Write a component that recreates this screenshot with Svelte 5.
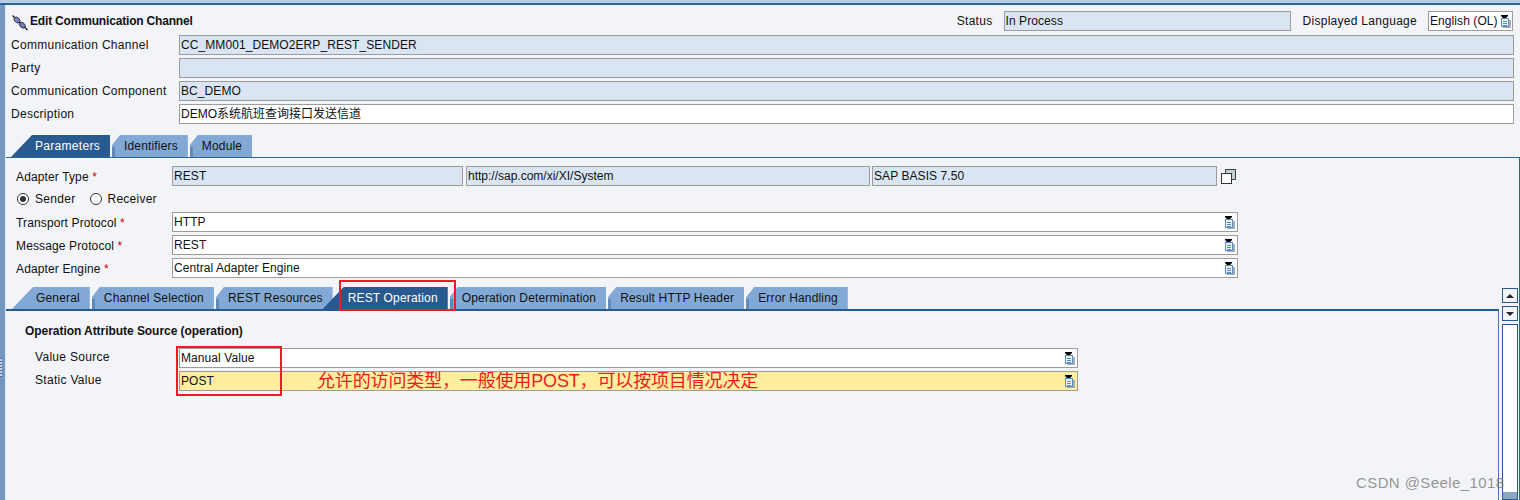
<script>
  const headRows = [
    { label: 'Communication Channel', value: 'CC_MM001_DEMO2ERP_REST_SENDER', ro: true },
    { label: 'Party', value: '', ro: true },
    { label: 'Communication Component', value: 'BC_DEMO', ro: true },
    { label: 'Description', value: 'DEMO系统航班查询接口发送信道', ro: false }
  ];
  const protoRows = [
    { label: 'Transport Protocol', value: 'HTTP' },
    { label: 'Message Protocol', value: 'REST' },
    { label: 'Adapter Engine', value: 'Central Adapter Engine' }
  ];
  const innerTabs = ['General', 'Channel Selection', 'REST Resources', 'REST Operation', 'Operation Determination', 'Result HTTP Header', 'Error Handling'];
</script>

{#snippet help()}
  <svg class="help" width="10" height="13" viewBox="0 0 10 13">
    <rect x="2" y="5" width="8" height="8" fill="#a9aeb4"/>
    <rect x="0.5" y="3.5" width="7" height="8" fill="#eaf1f9" stroke="#5b8dc2"/>
    <path d="M2 6.5h4M2 8.5h4M2 10.5h4" stroke="#5b8dc2"/>
    <path d="M0 0h7v1l-2 2h-3l-2-2z" fill="#000"/>
  </svg>
{/snippet}

<div class="app">
  <div class="topbar"></div>
  <div class="main">
    <div class="strip"><span class="grip"></span></div>
    <div class="content">
      <header class="head">
        <div class="titlerow">
          <svg class="plug" width="16" height="16" viewBox="0 0 16 16">
            <path d="M0.5 0.5L15.5 15" stroke="#111" stroke-width="1.1"/>
            <ellipse cx="5" cy="5" rx="3.4" ry="2.4" transform="rotate(42 5 5)" fill="#7d86c8" stroke="#222" stroke-width=".8"/>
            <ellipse cx="10.4" cy="10.2" rx="3.4" ry="2.4" transform="rotate(42 10.4 10.2)" fill="#6f7ab8" stroke="#222" stroke-width=".8"/>
          </svg>
          <h1>Edit Communication Channel</h1>
          <span class="lab status">Status</span>
          <div class="field ro statusf">In Process</div>
          <span class="lab langl">Displayed Language</span>
          <div class="field lang">English (OL){@render help()}</div>
        </div>
        <div class="formgrid">
          {#each headRows as r}
            <span class="lab">{r.label}</span>
            <div class="field" class:ro={r.ro}>{r.value}</div>
          {/each}
        </div>
      </header>

      <nav class="tabs outer">
        <span class="tab first active">Parameters</span>
        <span class="tab">Identifiers</span>
        <span class="tab">Module</span>
      </nav>

      <section class="panel">
        <div class="panelform">
          <div class="prow">
            <span class="lab plab">Adapter Type <b>*</b></span>
            <div class="field ro a1">REST</div>
            <div class="field ro a2">http://sap.com/xi/XI/System</div>
            <div class="field ro a3">SAP BASIS 7.50</div>
            <svg class="copy" width="15" height="15" viewBox="0 0 15 15">
              <rect x="4.5" y="0.5" width="10" height="10" fill="#c3d0d8" stroke="#444"/>
              <rect x="0.5" y="4.5" width="10" height="10" fill="#fff" stroke="#333"/>
            </svg>
          </div>
          <div class="prow radios">
            <span class="radio on"></span><span class="lab rlab">Sender</span>
            <span class="radio"></span><span class="lab rrec">Receiver</span>
          </div>
          {#each protoRows as r}
            <div class="prow">
              <span class="lab plab">{r.label} <b>*</b></span>
              <div class="field wide">{r.value}{@render help()}</div>
            </div>
          {/each}
        </div>

        <nav class="tabs inner">
          {#each innerTabs as t, i}
            <span class="tab" class:first={i === 0} class:active={t === 'REST Operation'}>{t}</span>
          {/each}
        </nav>

        <div class="pane">
          <h2>Operation Attribute Source (operation)</h2>
          <div class="panegrid">
            <span class="lab">Value Source</span>
            <div class="field long">Manual Value{@render help()}</div>
            <span class="lab">Static Value</span>
            <div class="field long req">POST{@render help()}</div>
          </div>
        </div>
      </section>
    </div>
  </div>

  <div class="scroll">
    <button class="sbtn" aria-label="up"><span class="up"></span></button>
    <button class="sbtn" aria-label="down"><span class="down"></span></button>
    <div class="track"><div class="thumb"></div></div>
  </div>

  <div class="redbox rb1"></div>
  <div class="redbox rb2"></div>
  <div class="note">允许的访问类型，一般使用POST，可以按项目情况决定</div>
  <div class="mark">CSDN @Seele_1018</div>
</div>

<style>
  :global(body) { margin: 0; }
  .app {
    position: relative; width: 1520px; height: 500px; overflow: hidden;
    background: #f2f4f8; color: #111;
    font: 12px/20px "Liberation Sans", "Noto Sans CJK SC", sans-serif;
    letter-spacing: .3px;
  }
  .topbar { height: 3px; background: #b7cde6; border-bottom: 2px solid #2f6496; box-sizing: content-box; }
  .main { display: flex; height: 495px; }
  .strip { width: 6px; background: #7397c0; border-right: 1px solid #e6ebf3; position: relative; flex: none; box-sizing: border-box; }
  .grip { position: absolute; left: 0; top: 353px; width: 2px; height: 19px; background: repeating-linear-gradient(#4a6f9c 0 1px, #c5d3e4 1px 3px); }
  .content { flex: 1; min-width: 0; }

  .head { padding: 5px 6px 0 5px; }
  .titlerow { display: flex; align-items: center; height: 22px; margin-bottom: 3px; }
  .plug { margin: 3px 2px 0 1px; flex: none; }
  h1 { margin: 0; font-size: 12px; font-weight: bold; letter-spacing: -.18px; }
  .status { margin-left: auto; }
  .statusf { width: 287px; height: 22px; margin-left: 11px; flex: none; line-height: 20px; letter-spacing: .3px; }
  .langl { margin-left: 12px; letter-spacing: .28px; }
  .lang { width: 85px; height: 22px; margin: 0 1px 0 11px; flex: none; line-height: 20px; padding-left: 2px; letter-spacing: .4px; }
  .lang .help { right: 1px; }

  .lab { white-space: nowrap; line-height: 20px; }
  .lab b { color: #c00; font-weight: normal; }
  .field {
    position: relative; box-sizing: border-box; height: 20px; background: #fff;
    border: 1px solid #9c9c9c; padding: 0 1px; line-height: 18px; white-space: nowrap; overflow: hidden;
    letter-spacing: .08px;
  }
  .field.ro { background: #d9e5f2; }
  .help { position: absolute; right: 2px; top: 3px; }

  .formgrid { display: grid; grid-template-columns: 168px 1fr; row-gap: 3px; }
  .formgrid .field:last-child { letter-spacing: 0; }

  .tabs { display: flex; height: 22px; position: relative; letter-spacing: .16px; }
  .outer { margin: 11px 0 0 5px; }
  .tab {
    position: relative; height: 22px; box-sizing: border-box; line-height: 22px; margin-left: 2px;
    padding: 0 10px 0 12px; background: #82a9d6; color: #111; white-space: nowrap;
    clip-path: polygon(0 100%, 0 45%, 8px 0, 100% 0, 100% 100%);
  }
  .tab::before { content: ""; position: absolute; left: 0; bottom: 0; width: 3px; height: 10px; background: #5f88b6; }
  .tab.first { margin-left: 0; padding-left: 24px; clip-path: polygon(0 100%, 21px 0, 100% 0, 100% 100%); }
  .tab.first::before, .tab.active::before { display: none; }
  .tab.active {
    background: #285a8f; color: #fff; padding-left: 25px; margin-left: -10px; z-index: 1;
    clip-path: polygon(0 100%, 21px 0, 100% 0, 100% 100%);
  }
  .tab.first.active { margin-left: 0; padding-left: 24px; letter-spacing: .3px; }

  .panel { border-top: 1px solid #2f6496; border-right: 1px solid #2f6496; height: 343px; box-sizing: border-box; }
  .panelform { padding: 8px 0 0 10px; }
  .prow { display: flex; align-items: center; height: 20px; margin-bottom: 3px; }
  .plab { width: 156px; flex: none; letter-spacing: .13px; padding-top: 1px; }
  .a1 { width: 291px; margin-right: 3px; }
  .a2 { width: 404px; margin-right: 2px; letter-spacing: 0; }
  .a3 { width: 345px; margin-right: 4px; }
  .wide { width: 1066px; }
  .radios { padding-left: 1px; }
  .radio { width: 10px; height: 10px; border: 1px solid #333; border-radius: 50%; background: #fff; position: relative; margin-right: 6px; }
  .radio.on::after { content: ""; position: absolute; inset: 2px; border-radius: 50%; background: #333; }
  .rlab { margin-right: 14px; }
  .rrec { letter-spacing: .25px; }

  .inner { margin: 9px 0 0 6px; }
  .pane { width: 1493px; box-sizing: border-box; border-top: 2px solid #285a8f; border-right: 1px solid #4a78a8; height: 191px; padding: 12px 0 0 19px; }
  h2 { margin: 0 0 9px; font-size: 12px; font-weight: bold; line-height: 16px; letter-spacing: -.05px; }
  .panegrid { display: grid; grid-template-columns: 144px 899px; row-gap: 3px; padding-left: 10px; }
  .panegrid .lab { line-height: 16px; padding-top: 1px; }
  .long { padding-left: 1px; }
  .req { background: #ffee9e; }

  .scroll { position: absolute; left: 1502px; top: 288px; width: 16px; bottom: 0; display: flex; flex-direction: column; gap: 3px; }
  .sbtn { width: 16px; height: 15px; box-sizing: border-box; padding: 0; border: 1px solid #285a8f; background: #f2f4f8; display: flex; align-items: center; justify-content: center; }
  .up { border: 4px solid transparent; border-top: 0; border-bottom: 4px solid #223; }
  .down { border: 4px solid transparent; border-bottom: 0; border-top: 4px solid #223; }
  .track { flex: 1; border: 1px solid #285a8f; background: #fff; position: relative; }
  .thumb { position: absolute; left: 0; right: 0; top: 167px; bottom: 0; background: #8aa9c0; }

  .redbox { position: absolute; box-sizing: border-box; border: 2px solid #ed1c24; }
  .rb1 { left: 339px; top: 280px; width: 117px; height: 31px; z-index: 2; }
  .rb2 { left: 176px; top: 346px; width: 106px; height: 50px; }
  .note { position: absolute; left: 317px; top: 370px; font-size: 18px; line-height: 22px; color: #ed1c24; letter-spacing: -.15px; white-space: nowrap; }
  .mark { position: absolute; left: 1356px; top: 474px; font-size: 15px; line-height: 18px; color: rgba(110,110,110,.72); letter-spacing: .4px; white-space: nowrap; }
</style>
